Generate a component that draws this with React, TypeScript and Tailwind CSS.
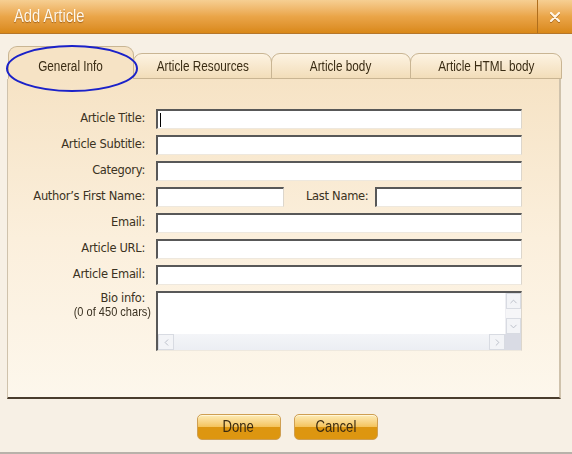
import { ChevronUp, ChevronDown, ChevronLeft, ChevronRight } from 'lucide-react';

const labelFont = { fontFamily: '"DejaVu Sans", Verdana, sans-serif' };
const narrow = { fontFamily: '"Liberation Sans", Arial, sans-serif' };

const Field = ({ w = 'flex-1' }: { w?: string }) => (
  <div className={`${w} h-[20px] bg-white border-t-2 border-l-2 border-[#585858] border-r border-b border-r-[#dcd6cc] border-b-[#eee8de]`} />
);

const Row = ({ label, children }: { label: string; children?: React.ReactNode }) => (
  <div className="flex items-center h-[20px] gap-[11px]">
    <span className="w-[137px] text-right text-[11.5px] tracking-[-0.3px] text-[#3b3222] shrink-0" style={labelFont}>{label}</span>
    {children ?? <Field />}
  </div>
);

const tabs = ['General Info', 'Article Resources', 'Article body', 'Article HTML body'];
const tabW = ['w-[126px]', 'w-[139px]', 'w-[140px]', 'w-[152px]'];

export default function App() {
  return (
    <div className="w-[572px] h-[454px] bg-[#f7f0e5] flex flex-col border-b-2 border-[#b8b2aa] overflow-hidden">
      {/* ── Title bar ── */}
      <div className="h-[34px] flex shrink-0 bg-gradient-to-b from-[#f6cf92] via-[#eaa548] to-[#d98816] border-b border-[#b5762a]">
        <div className="flex-1 flex items-center pl-[14px] text-[18px] text-[#fff8ea] [text-shadow:0_1px_1px_rgba(120,60,0,0.6)]" style={narrow}>
          <span className="inline-block scale-x-[0.82] origin-left">Add Article</span>
        </div>
        <div className="w-[35px] flex items-center justify-center border-l border-[#b06e1c]">
          <svg width="10" height="10" viewBox="0 0 10 10" className="drop-shadow-[0_1px_0_rgba(120,60,0,0.5)]">
            <path d="M1 1L9 9M9 1L1 9" stroke="#fff5e6" strokeWidth="2.2" strokeLinecap="round" />
          </svg>
        </div>
      </div>

      {/* ── Tabs ── */}
      <div className="relative flex items-end pl-[8px] pt-[12px] h-[45px] shrink-0">
        {tabs.map((t, i) => (
          <div key={t}
            className={`${tabW[i]} flex items-center justify-center rounded-t-[9px] border border-[#c9b593] text-[14px] text-[#3a2c14] ${
              i === 0 ? 'h-[33px] pt-[7px] bg-[#f6e3c5] border-b-transparent' : 'h-[26px] bg-gradient-to-b from-[#fdf3e2] to-[#f2ddb9] -ml-px'
            }`}
            style={narrow}>
            <span className="inline-block scale-x-[0.84] whitespace-nowrap">{t}</span>
          </div>
        ))}
        <svg className="absolute left-[5px] top-[11px]" width="134" height="49" viewBox="0 0 134 49">
          <ellipse cx="67" cy="23.5" rx="65" ry="22.5" fill="none" stroke="#1b22c9" strokeWidth="2" />
        </svg>
      </div>

      {/* ── Panel ── */}
      <div className="mx-[7px] w-[554px] h-[320px] shrink-0 bg-gradient-to-b from-[#f6e3c5] via-[#fbefdc] to-[#fdf7ec] border-l border-r-2 border-[#cfc2ac] border-b-2 border-b-[#4a3d2d] pt-[30px] pr-[37px] flex flex-col gap-[6px]">
        <Row label="Article Title:">
          <div className="flex-1 h-[20px] bg-white border-t-2 border-l-2 border-[#585858] border-r border-b border-r-[#dcd6cc] border-b-[#eee8de] flex items-center">
            <span className="w-px h-[14px] bg-black ml-[2px]" />
          </div>
        </Row>
        <Row label="Article Subtitle:" />
        <Row label="Category:" />
        <Row label="Author’s First Name:">
          <Field w="w-[128px]" />
          <span className="ml-[11px] -mr-[4px] text-[11.5px] tracking-[-0.3px] text-[#3b3222]" style={labelFont}>Last Name:</span>
          <Field />
        </Row>
        <Row label="Email:" />
        <Row label="Article URL:" />
        <Row label="Article Email:" />

        <div className="flex gap-[11px]">
          <div className="w-[137px] shrink-0 text-right text-[#3b3222] leading-[13px] pt-[1px]">
            <div className="text-[11.5px] tracking-[-0.3px]" style={labelFont}>Bio info:</div>
            <div className="text-[13px] -mr-[6px] whitespace-nowrap" style={narrow}>
              <span className="inline-block scale-x-[0.85] origin-right">(0 of 450 chars)</span>
            </div>
          </div>
          <div className="flex-1 h-[60px] bg-white border-t-2 border-l-2 border-[#585858] border-r border-b border-r-[#dcd6cc] border-b-[#eee8de] flex flex-col">
            <div className="flex flex-1">
              <div className="flex-1" />
              <div className="w-[16px] flex flex-col justify-between bg-[#f6f6f8] border-l border-[#eeeef2]">
                <div className="h-[16px] border border-[#d8dbe2] bg-[#f3f4f7] flex items-center justify-center"><ChevronUp size={11} className="text-[#b8bcc6]" strokeWidth={2} /></div>
                <div className="h-[16px] border border-[#d8dbe2] bg-[#f3f4f7] flex items-center justify-center"><ChevronDown size={11} className="text-[#b8bcc6]" strokeWidth={2} /></div>
              </div>
            </div>
            <div className="h-[16px] flex">
              <div className="flex-1 flex justify-between bg-gradient-to-b from-[#f4f5f8] to-[#eceef3]">
                <div className="w-[16px] border border-[#d8dbe2] bg-[#f3f4f7] flex items-center justify-center"><ChevronLeft size={11} className="text-[#b8bcc6]" strokeWidth={2} /></div>
                <div className="w-[16px] border border-[#d8dbe2] bg-[#f3f4f7] flex items-center justify-center"><ChevronRight size={11} className="text-[#b8bcc6]" strokeWidth={2} /></div>
              </div>
              <div className="w-[16px] bg-[#d9dbe4]" />
            </div>
          </div>
        </div>
      </div>

      {/* ── Buttons ── */}
      <div className="flex-1 flex items-start justify-center gap-[13px] pt-[15px] pl-[2px]">
        {['Done', 'Cancel'].map(b => (
          <button key={b} type="button"
            className="w-[84px] h-[26px] rounded-[5px] border border-[#cf9f52] bg-gradient-to-b from-[#fdebb5] via-[#f4c35a] via-50% to-[#dd9610] to-50% text-[16px] text-[#3a2a10] shadow-[inset_0_1px_0_#fff6d8]"
            style={narrow}>
            <span className="inline-block scale-x-[0.82]">{b}</span>
          </button>
        ))}
      </div>
    </div>
  );
}
